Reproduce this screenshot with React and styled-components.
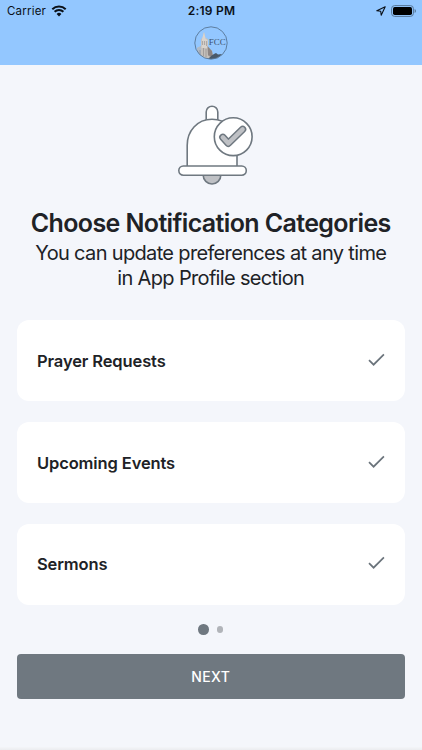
import React, { useState } from 'react';
import styled, { createGlobalStyle } from 'styled-components';

const GlobalStyle = createGlobalStyle`
    * {
        box-sizing: border-box;
    }
    body {
        margin: 0;
        background: #f4f6fb;
        color: #202226;
        font-family: Inter, "Liberation Sans", sans-serif;
    }
`

const Screen = styled.div`
    display: flex;
    flex-direction: column;
    width: 422px;
    height: 750px;
    overflow: hidden;
    background: #f4f6fb;
`

const Header = styled.header`
    display: flex;
    flex-direction: column;
    align-items: center;
    height: 65.4px;
    background: #93c7ff;
`

const StatusBar = styled.div`
    display: grid;
    grid-template-columns: 1fr auto 1fr;
    align-items: center;
    width: 100%;
    height: 22px;
    padding: 0 6px 0 7px;
    color: #0a1018;
    font-size: 11.5px;
    line-height: 22px;
`

const StatusSide = styled.div`
    display: flex;
    align-items: center;
    justify-content: ${props => props.$end ? 'flex-end' : 'flex-start'};
    gap: ${props => props.$end ? 5 : 4.5}px;
    & svg {
        display: block;
    }
`

const Carrier = styled.span`
    letter-spacing: 0.2px;
`

const Clock = styled.span`
    font-size: 12px;
    font-weight: 600;
    letter-spacing: 0.25px;
`

const Logo = styled.svg`
    display: block;
    margin-top: 4px;
`

const Content = styled.main`
    display: flex;
    flex-direction: column;
    flex: 1;
    padding: 39.6px 17px 0 16.5px;
`

const Bell = styled.svg`
    display: block;
    align-self: center;
    margin-left: 8.5px;
`

const Title = styled.h1`
    margin: 20px -10px 0;
    font-size: 25px;
    font-weight: 600;
    line-height: 32px;
    letter-spacing: -0.62px;
    text-align: center;
    white-space: nowrap;
`

const Subtitle = styled.p`
    margin: 2.5px 0 0;
    font-size: 20px;
    line-height: 25px;
    letter-spacing: -0.66px;
    text-align: center;
    white-space: nowrap;
`

const CategoryList = styled.ul`
    display: flex;
    flex-direction: column;
    gap: 20.6px;
    margin: 28.5px 0 0;
    padding: 0;
    list-style: none;
`

const CategoryItem = styled.li`
    display: flex;
    align-items: center;
    justify-content: space-between;
    height: 81.3px;
    padding: 0 20px 0 20.5px;
    border-radius: 12px;
    background: #fff;
    font-size: 16.5px;
    font-weight: 600;
    letter-spacing: -0.12px;
    cursor: pointer;
`

const Check = styled.svg`
    display: block;
    margin-bottom: 2px;
`

const Dots = styled.div`
    display: flex;
    align-items: center;
    justify-content: center;
    gap: 8px;
    height: 10px;
    margin-top: 19.5px;
`

const Dot = styled.span`
    width: ${props => props.$active ? 10.5 : 6.5}px;
    height: ${props => props.$active ? 10.5 : 6.5}px;
    border-radius: 50%;
    background: ${props => props.$active ? '#6f7880' : '#b1b4b9'};
`

const NextButton = styled.button`
    height: 45px;
    margin-top: 19.5px;
    border: 0;
    border-radius: 4px;
    background: #6f7880;
    color: #fff;
    font-family: inherit;
    font-size: 14px;
    font-weight: 500;
    letter-spacing: 0.35px;
    cursor: pointer;
`

const BottomEdge = styled.div`
    height: 3px;
    background: linear-gradient(#f3f5f9, #ebecef);
`

const WifiIcon = () => (
    <svg width="16" height="12" viewBox="0 0 16 12">
        <path d="M8 11.4 5.6 8.9a3.5 3.5 0 0 1 4.8 0Z" fill="#0a1018" />
        <path d="M3.6 6.7a6.3 6.3 0 0 1 8.8 0M1.3 4.2a9.6 9.6 0 0 1 13.4 0" fill="none" stroke="#0a1018" strokeWidth="2" />
    </svg>
)

const LocationIcon = () => (
    <svg width="10" height="10" viewBox="0 0 10 10">
        <path d="M9.2.8.8 4.7l3.9.6.5 3.9Z" fill="none" stroke="#0a1018" strokeWidth="1.1" strokeLinejoin="round" />
    </svg>
)

const BatteryIcon = () => (
    <svg width="25" height="12" viewBox="0 0 25 12">
        <rect x=".6" y=".6" width="21.8" height="10.8" rx="3" fill="none" stroke="#567697" />
        <rect x="2" y="2" width="19" height="8" rx="1.7" fill="#000" />
        <path d="M23.6 4.1a2 2 0 0 1 0 3.8Z" fill="#567697" />
    </svg>
)

// 圆形的教会 logo
const ChurchLogo = () => (
    <Logo width="34" height="34" viewBox="0 0 34 34">
        <defs>
            <clipPath id="logo-round"><circle cx="17" cy="17" r="16" /></clipPath>
        </defs>
        <g clipPath="url(#logo-round)">
            <path d="M3 34V22l4-2V13l1.5-1L10 6l1.5 6L14 13v8l4 4 1 5 9 0-4 5Z" fill="#c5c0bb" />
            <path d="M8 13l2-7 1.6 7 2 1v8H7.5Z" fill="#d9d4ce" />
            <path d="M3 22l4-2v11H3Z" fill="#aebac8" />
            <path d="M13.5 20l4.5 5 1 5.5-5-1Z" fill="#8d8583" />
            <path d="M8.6 15v4M10.6 15v4M12.6 15v5M6 24v6M9.5 22v8M12 23v8M16 26v5" stroke="#8a8584" strokeWidth=".6" />
            <path d="M17 30l3-2 2-1 2 1.5 4-.5-4 5H14Z" fill="#49596a" />
        </g>
        <circle cx="17" cy="17" r="16.2" fill="none" stroke="#577594" strokeWidth=".9" />
        <text x="14.8" y="19.4" fill="#41566f" fontFamily="'Liberation Serif', serif" fontSize="9.2" textLength="17" lengthAdjust="spacingAndGlyphs">FCC</text>
    </Logo>
)

const BellIcon = () => (
    <Bell width="76" height="82" viewBox="0 0 76 82" stroke="#6f7880" strokeWidth="1.6">
        <path d="M26.2 70.2a8.8 8.8 0 0 0 17.6 0Z" fill="#bfc1c5" />
        <path d="M29.2 17V7a5.8 5.8 0 0 1 11.6 0V17Z" fill="#fff" />
        <path d="M10.2 62V40.2C10.2 26.2 20 14.2 35 14.2S60 26.2 60 40.2V62Z" fill="#fff" />
        <rect x="1.8" y="61" width="67.5" height="9.2" rx="4.6" fill="#fff" />
        <circle cx="56.2" cy="31.7" r="18.9" fill="#fff" />
        <path d="M45.8 32.3 51.2 38.3 65.6 24.4" fill="none" strokeWidth="7.4" strokeLinecap="round" strokeLinejoin="round" />
        <path d="M45.8 32.3 51.2 38.3 65.6 24.4" fill="none" stroke="#bfc1c5" strokeWidth="4.4" strokeLinecap="round" strokeLinejoin="round" />
    </Bell>
)

const CheckIcon = () => (
    <Check width="17" height="14" viewBox="0 0 17 14">
        <path d="M1 7.1 5.6 11.7 15.9 1.3" fill="none" stroke="#6a737b" strokeWidth="1.7" />
    </Check>
)

const categories = ['Prayer Requests', 'Upcoming Events', 'Sermons'];

function App() {
    const [selected, setSelected] = useState(categories);

    const toggle = (name) => {
        if (selected.includes(name)) {
            setSelected(selected.filter(item => item !== name));
        } else {
            setSelected([...selected, name]);
        }
    }

    return (
        <Screen>
            <GlobalStyle />
            <Header>
                <StatusBar>
                    <StatusSide>
                        <Carrier>Carrier</Carrier>
                        <WifiIcon />
                    </StatusSide>
                    <Clock>2:19 PM</Clock>
                    <StatusSide $end>
                        <LocationIcon />
                        <BatteryIcon />
                    </StatusSide>
                </StatusBar>
                <ChurchLogo />
            </Header>

            <Content>
                <BellIcon />
                <Title>Choose Notification Categories</Title>
                <Subtitle>You can update preferences at any time<br />in App Profile section</Subtitle>

                <CategoryList>
                    {categories.map(name => (
                        <CategoryItem key={name} onClick={() => toggle(name)}>
                            {name}
                            {selected.includes(name) && <CheckIcon />}
                        </CategoryItem>
                    ))}
                </CategoryList>

                <Dots>
                    <Dot $active />
                    <Dot />
                </Dots>
                <NextButton>NEXT</NextButton>
            </Content>
            <BottomEdge />
        </Screen>
    )
}

export default App;
